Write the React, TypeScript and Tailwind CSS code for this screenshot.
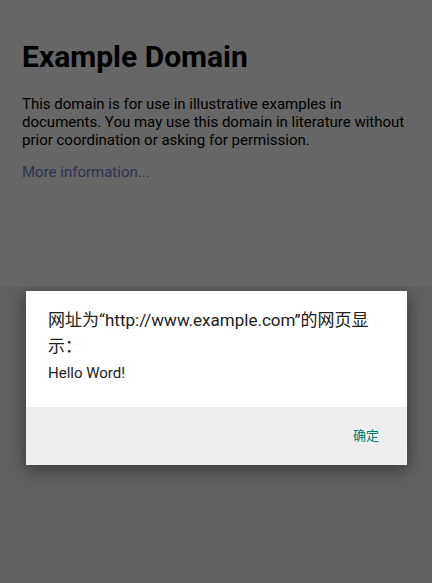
export default function App() {
  return (
    <div className="relative flex flex-col h-[583px] w-full overflow-hidden font-['Roboto','Noto_Sans_CJK_SC',sans-serif]">
      <section className="h-[287px] bg-[#666666] px-[22px] pt-[37px]">
        <h1 className="text-[30px] leading-[40px] font-bold text-black">Example Domain</h1>
        <p className="mt-[18px] text-[15px] leading-[18px] text-black">
          This domain is for use in illustrative examples in documents. You may use this domain in
          literature without prior coordination or asking for permission.
        </p>
        <p className="mt-[14px] text-[15px] leading-[18px] text-[#2e3452]">More information...</p>
      </section>
      <div className="flex-1 bg-[#606060]"></div>

      <div className="absolute left-[26px] top-[291px] w-[381px] bg-white shadow-[0_4px_14px_rgba(0,0,0,0.45)]">
        <div className="px-[22px] pt-[16px] pb-[24px]">
          <h2 className="text-[17px] leading-[26px] text-[#212121]">
            网址为“http://www.example.com”的网页显
            <br />
            示：
          </h2>
          <p className="mt-[4px] text-[15px] leading-[20px] text-[#212121]">Hello Word!</p>
        </div>
        <div className="flex h-[58px] items-center justify-end bg-[#eeeeee] pr-[28px]">
          <button className="text-[13px] leading-[20px] text-[#00796b]">确定</button>
        </div>
      </div>
    </div>
  );
}
